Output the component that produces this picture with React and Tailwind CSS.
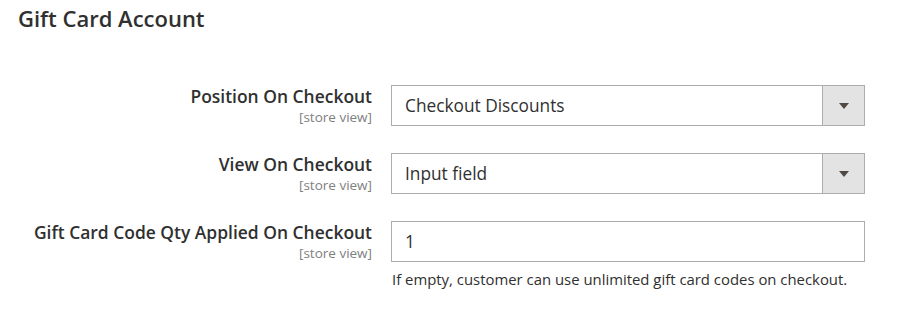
export default function App() {
  const font = { fontFamily: '"Open Sans", sans-serif' };
  const Row = ({ label, children, note }) => (
    <div className="flex items-start">
      <div className="w-[372px] h-[42px] shrink-0 text-right -mt-[1px]">
        <div className="text-[17.45px] font-semibold text-[#303030] leading-[24px]">{label}</div>
        <div className="text-[13.5px] text-[#808080] leading-[18px]">[store view]</div>
      </div>
      <div className="ml-[19px] w-[474px]">
        {children}
        {note && <div className="mt-[7px] text-[14.9px] text-[#303030] leading-[20px] pl-[1px]">{note}</div>}
      </div>
    </div>
  );
  const Select = ({ value }) => (
    <div className="flex h-[41px] border border-[#adadad] bg-white">
      <div className="flex-1 flex items-center pl-[13px] text-[17.3px] text-[#303030]">{value}</div>
      <div className="w-[42px] border-l border-[#adadad] bg-[#e3e3e3] flex items-center justify-center">
        <svg width="10" height="6" viewBox="0 0 10 6"><path d="M0 0h10L5 6z" fill="#514943" /></svg>
      </div>
    </div>
  );
  return (
    <div className="w-[915px] h-[314px] bg-white" style={font}>
      <div className="pl-[18px] pt-[3px] text-[22px] font-semibold text-[#303030] leading-[30px]">Gift Card Account</div>
      <div className="mt-[52px] flex flex-col gap-[27px]">
        <Row label="Position On Checkout"><Select value="Checkout Discounts" /></Row>
        <Row label="View On Checkout"><Select value="Input field" /></Row>
        <Row label="Gift Card Code Qty Applied On Checkout" note="If empty, customer can use unlimited gift card codes on checkout.">
          <div className="h-[41px] border border-[#adadad] bg-white flex items-center pl-[13px] text-[17.3px] text-[#303030]">1</div>
        </Row>
      </div>
    </div>
  );
}
